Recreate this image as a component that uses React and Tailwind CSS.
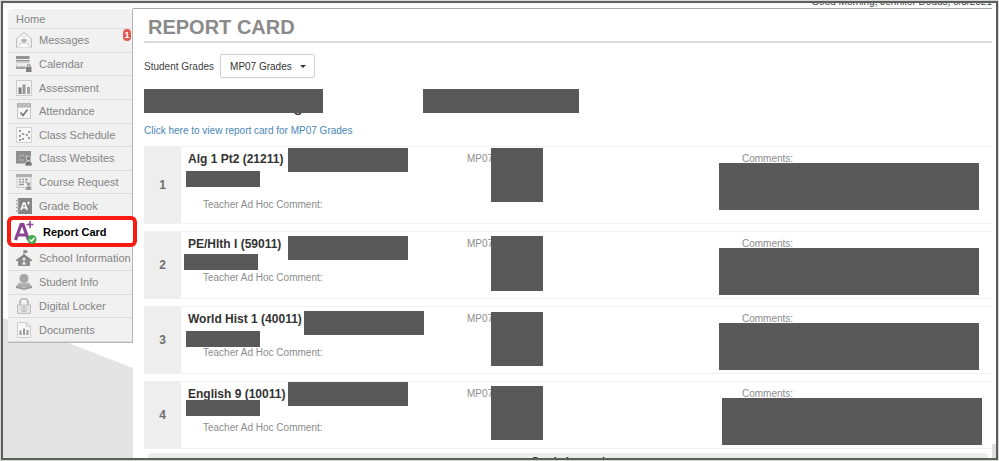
import React, { useState } from 'react';

const Svg = ({ children }) => (
  <svg viewBox="0 0 16 16" className="w-4 h-4 shrink-0" aria-hidden="true">{children}</svg>
);

const MessagesIcon = () => (
  <Svg>
    <path d="M.5 6.500 8 .5l7.500 6v9H.5z" fill="#f4f4f4" stroke="#c0c0c0" />
    <path d="M3 4.500h10v7H3z" fill="#fcfcfc" stroke="#d4d4d4" strokeWidth=".6" />
    <path d="m.5 15.500 5-4.500h5l5 4.500" fill="#fbfbfb" stroke="#c6c6c6" strokeWidth=".8" />
    <ellipse cx="8" cy="8.500" rx="2.800" ry="2" fill="#b2b2b2" />
  </Svg>
);

const CalendarIcon = () => (
  <Svg>
    <path d="M0 0h13.500v3H0zM0 4h13.500v1.500H0z" fill="#939393" />
    <path d="M.5 6.500h12.500v5H.5z" fill="#ececec" stroke="#c4c4c4" strokeWidth=".8" />
    <path d="M0 10.500h9.500V13H0z" fill="#a2a2a2" />
    <path d="M11.200 11.500V10a1.500 1.500 0 0 1 3 0v1.500" fill="none" stroke="#868686" />
    <path d="M10 11h5.500v5H10z" fill="#808080" />
  </Svg>
);

const AssessmentIcon = () => (
  <Svg>
    <path d="M.5.5h15v15H.5z" fill="#f3f3f3" stroke="#cbcbcb" />
    <path d="M2.500 7.500h3V14h-3z" fill="#808080" />
    <path d="M6.500 4.500h3V14h-3z" fill="#989898" />
    <path d="M11 7h3v7h-3z" fill="#a4a4a4" />
  </Svg>
);

const AttendanceIcon = () => (
  <Svg>
    <path d="M1.500 1h13v14.500h-13z" fill="#f7f7f7" stroke="#c4c4c4" />
    <path d="M1 0h14v4.500H1z" fill="#b4b4b4" />
    <path d="M4 1v2M8 1v2M12 1v2" stroke="#dedede" />
    <path d="m4.500 9.500 2.500 3 4.500-6" fill="none" stroke="#777" strokeWidth="1.700" />
  </Svg>
);

const ScheduleIcon = () => (
  <Svg>
    <path d="M.5.5h15v15H.5z" fill="#f8f8f8" stroke="#d2d2d2" />
    <path d="M3 3h2v2H3zM6 6h2v2H6zM12 4h2v2h-2zM3 8h2v2H3zM6 11h2v2H6zM10 7h2v2h-2zM3 12h2v2H3zM12 10h2v2h-2z" fill="#959595" />
    <path d="m4 4 3 3 4 1 2-3M4 9l3 3M11 8l2 3" fill="none" stroke="#bbb" strokeWidth=".6" />
  </Svg>
);

const WebsitesIcon = () => (
  <Svg>
    <path d="M0 1h15v12.500H0z" fill="#8f8f8f" />
    <path d="M3 6h2M6 5.500h2M9 6h2" stroke="#c9c9c9" />
    <path d="M2 10h6" stroke="#b8b8b8" />
    <circle cx="12.500" cy="8.500" r="2.200" fill="#777" stroke="#eee" strokeWidth=".7" />
    <path d="M9 16v-3l2-2h3l2 2v3z" fill="#777" stroke="#eee" strokeWidth=".7" />
  </Svg>
);

const CourseIcon = () => (
  <Svg>
    <path d="M0 0h16v3H0z" fill="#b0b0b0" />
    <path d="M1 3h14v10.500H1z" fill="#f0f0f0" stroke="#bbb" strokeWidth=".7" />
    <path d="M3 5.500h2M6 5.500h2M9 5.500h3M3 8h2M6 8h2M9 8h2M3 10.500h5" stroke="#9a9a9a" strokeWidth="1.500" />
    <circle cx="12.500" cy="10" r="1.800" fill="#9a9a9a" />
    <path d="M9.500 16c0-5.500 6-5.500 6 0z" fill="#9a9a9a" />
  </Svg>
);

const GradeBookIcon = () => (
  <Svg>
    <path d="M2 0h14v16H2z" fill="#858585" />
    <path d="M0 2.500h3.500M0 6h3.500M0 9.500h3.500M0 13h3.500" stroke="#aaa" strokeWidth="1.500" />
    <path d="m5 12 2.600-7h1L11.200 12M6 9.800h4.200" fill="none" stroke="#fff" strokeWidth="1.600" />
    <path d="M11 5h3M12.500 3.500v3" stroke="#fff" />
  </Svg>
);

const SchoolIcon = () => (
  <Svg>
    <path d="M8 0v5M8 .8h3v1.800H8z" fill="#888" stroke="#888" strokeWidth=".8" />
    <path d="M0 10 8 4l8 6v1H0z" fill="#858585" />
    <path d="M2 9.500h12V16H2z" fill="#8c8c8c" />
    <circle cx="8" cy="9" r="1.500" fill="#eee" />
    <path d="M6 14.500c1-.8.8-3 2-3s1 2.200 2 3z" fill="#eee" />
  </Svg>
);

const StudentIcon = () => (
  <Svg>
    <circle cx="8" cy="4.500" r="4.500" fill="#a6a6a6" />
    <path d="M1 13.500c0-5.500 4-5.500 7-4 3-1.500 7-1.500 7 4z" fill="#b0b0b0" />
    <path d="M0 11.500 8 14l8-2.500v2.500L8 16l-8-2z" fill="#9c9c9c" />
  </Svg>
);

const LockerIcon = () => (
  <Svg>
    <path d="M4 7V4.500a4 4 0 0 1 8 0V7" fill="none" stroke="#bcbcbc" strokeWidth="2" />
    <path d="M1.500 7h13v8.500h-13z" fill="#e6e6e6" stroke="#bbb" />
    <circle cx="8" cy="11.200" r="2.600" fill="#f5f5f5" stroke="#b0b0b0" />
    <path d="M8 10v2.500" stroke="#999" strokeWidth="1.200" />
  </Svg>
);

const DocumentsIcon = () => (
  <Svg>
    <path d="M1.500.5h9l4 4v11h-13z" fill="#f7f7f7" stroke="#cacaca" />
    <path d="M10.500.5v4h4" fill="none" stroke="#cacaca" />
    <path d="M3.500 8.500h2V13h-2zM7 6.500h2V13H7zM10.500 8h2v5h-2z" fill="#9a9a9a" />
  </Svg>
);

const ReportCardIcon = () => (
  <svg viewBox="0 0 24 24" className="w-6 h-6 shrink-0" aria-hidden="true">
    <path d="m1.500 20 5.500-15.500h2L14.500 20M4 15h8" fill="none" stroke="#8a4593" strokeWidth="3.200" />
    <path d="M12.500 4.500h7M16 1v7" stroke="#8a4593" strokeWidth="1.600" />
    <circle cx="18" cy="19.500" r="4.500" fill="#43ac4c" />
    <path d="m15.700 19.500 1.800 1.800 3-3.600" fill="none" stroke="#fff" strokeWidth="1.400" />
  </svg>
);

const upperItems = [
  { label: 'Messages', Icon: MessagesIcon, badge: 1 },
  { label: 'Calendar', Icon: CalendarIcon },
  { label: 'Assessment', Icon: AssessmentIcon },
  { label: 'Attendance', Icon: AttendanceIcon },
  { label: 'Class Schedule', Icon: ScheduleIcon },
  { label: 'Class Websites', Icon: WebsitesIcon },
  { label: 'Course Request', Icon: CourseIcon },
  { label: 'Grade Book', Icon: GradeBookIcon },
];

const lowerItems = [
  { label: 'School Information', Icon: SchoolIcon },
  { label: 'Student Info', Icon: StudentIcon },
  { label: 'Digital Locker', Icon: LockerIcon },
  { label: 'Documents', Icon: DocumentsIcon },
];

// The masks hide names, marks and remarks of the student
const courses = [
  {
    id: 1,
    name: 'Alg 1 Pt2 (21211)',
    size: 'h-[78px]',
    gap: 'mt-8',
    masks: [
      'left-[107px] top-px w-[120px] h-6',
      'left-[5px] top-6 w-[74px] h-4',
      'left-[310px] top-px w-[52px] h-[54px]',
      'left-[538px] top-4 w-[260px] h-[47px]',
    ],
  },
  {
    id: 2,
    name: 'PE/Hlth I (59011)',
    size: 'h-[68px]',
    gap: 'mt-5',
    masks: [
      'left-[107px] top-1 w-[120px] h-6',
      'left-[3px] top-[22px] w-[74px] h-4',
      'left-[310px] top-1 w-[52px] h-[55px]',
      'left-[538px] top-4 w-[260px] h-[47px]',
    ],
  },
  {
    id: 3,
    name: 'World Hist 1 (40011)',
    size: 'h-[68px]',
    gap: 'mt-5',
    masks: [
      'left-[123px] top-1 w-[120px] h-6',
      'left-[5px] top-6 w-[74px] h-4',
      'left-[310px] top-[5px] w-[52px] h-[54px]',
      'left-[538px] top-4 w-[260px] h-[47px]',
    ],
  },
  {
    id: 4,
    name: 'English 9 (10011)',
    size: 'h-[68px]',
    gap: 'mt-5',
    masks: [
      'left-[107px] top-0 w-[120px] h-6',
      'left-[5px] top-[18px] w-[74px] h-4',
      'left-[310px] top-1 w-[52px] h-[54px]',
      'left-[541px] top-4 w-[260px] h-[47px]',
    ],
  },
];

const NavItem = ({ label, Icon, badge }) => (
  <a
    href="#"
    className="relative flex-1 flex items-center gap-[7px] pl-2 border-b border-[#dcdcdc] text-[#858585] whitespace-nowrap"
  >
    <Icon />
    {label}
    {badge && (
      <span className="absolute top-0 right-px w-2 h-3 rounded-sm bg-[#e2574f] text-white text-[9px] leading-3 font-bold text-center">
        {badge}
      </span>
    )}
  </a>
);

const Sidebar = () => (
  <nav className="relative pl-[5px] pt-px w-[130px] shrink-0 text-[11px] leading-4">
    {/* Grey swoosh behind the menu */}
    <svg
      viewBox="0 0 130 140"
      preserveAspectRatio="none"
      className="absolute left-0 bottom-0 w-full h-[140px]"
      aria-hidden="true"
    >
      <path d="M0 0C30 10 80 31 130 50V140H0z" fill="#e4e4e4" />
    </svg>

    <div className="relative">
      <div className="flex flex-col border-r border-[#b5b5b5] rounded-tl bg-[#f1f1f1]">
        <a href="#" className="h-5 pl-2 border-b border-[#dcdcdc] text-[#858585] leading-5">Home</a>
        <div className="h-[189px] flex flex-col">
          {upperItems.map((item) => <NavItem key={item.label} {...item} />)}
        </div>
      </div>

      <a
        href="#"
        aria-current="page"
        className="relative flex items-center gap-[5px] h-[31px] -ml-px -mr-1 pl-[3px] -mt-0.5 z-10 bg-white border-4 border-[#fb1a12] rounded-md font-bold text-black whitespace-nowrap"
      >
        <ReportCardIcon />
        Report Card
      </a>

      <div className="h-24 flex flex-col border-r border-b border-[#b5b5b5] bg-[#f1f1f1]">
        {lowerItems.map((item) => <NavItem key={item.label} {...item} />)}
      </div>
    </div>
  </nav>
);

const CourseRow = ({ course }) => (
  <article className={`relative flex border-y border-[#f1f1f1] ${course.size}`}>
    <div className="w-[37px] shrink-0 flex items-center justify-center bg-[#eeeeee] text-xs font-bold text-[#6f6f6f]">
      {course.id}
    </div>
    <div className="relative flex-1 flex pl-[7px] pt-1 text-[10px] leading-4 text-[#8c8c8c]">
      <div className="w-[279px]">
        <h2 className="text-xs leading-4 font-bold text-[#333]">{course.name}</h2>
        <p className={`pl-[15px] leading-3 ${course.gap}`}>Teacher Ad Hoc Comment:</p>
      </div>
      <div className="w-[275px]">MP07</div>
      <div>Comments:</div>
      {course.masks.map((mask) => (
        <span key={mask} className={`absolute bg-[#595959] ${mask}`} />
      ))}
    </div>
  </article>
);

const App = () => {
  const [period, setPeriod] = useState('MP07 Grades');

  return (
    <div className="h-screen p-px bg-[#d3d8d3] font-['Liberation_Sans',Arial,sans-serif]">
      <div className="h-full flex flex-col border-2 border-[#5b5e5b] bg-white overflow-hidden">
        {/* --- Greeting strip, scrolled almost out of view --- */}
        <header className="h-[5px] shrink-0 flex items-end justify-end pr-1 overflow-hidden bg-[#fafafa] text-[10px] leading-3 text-[#444]">
          Good Morning, Jennifer Dodds, 6/3/2021
        </header>

        <div className="flex-1 min-h-0 flex">
          <Sidebar />

          <main className="relative flex-1 min-w-0 pl-[11px] pr-1 overflow-hidden">
            <div className="-ml-[11px] pl-[11px] border-t border-[#a8a8a8]">
              <h1 className="h-[34px] pl-1 pt-[6px] border-b-2 border-[#dadada] text-xl leading-6 font-bold text-[#8a8a8a]">
                REPORT CARD
              </h1>
            </div>

            {/* --- Marking period --- */}
            <div className="mt-[11px] flex items-center gap-[6px] text-[10px] text-[#444]">
              <label htmlFor="period">Student Grades</label>
              <div className="relative">
                <select
                  id="period"
                  value={period}
                  onChange={(e) => setPeriod(e.target.value)}
                  className="appearance-none block w-[95px] h-6 pl-[9px] border border-[#cfcfcf] rounded-xs bg-white text-[#333]"
                >
                  <option>MP07 Grades</option>
                  <option>MP06 Grades</option>
                </select>
                <span className="absolute right-[9px] top-[11px] border-x-3 border-t-3 border-x-transparent border-t-[#333] pointer-events-none" />
              </div>
            </div>

            <div className="relative mt-[11px] h-7">
              <div className="pl-[149px] pt-1 text-lg leading-6 text-[#333]">g</div>
              <span className="absolute left-0 top-0 w-[179px] h-6 bg-[#595959]" />
              <span className="absolute left-[279px] top-0 w-[156px] h-6 bg-[#595959]" />
            </div>

            <a href="#" className="block mt-[6px] text-[10px] leading-4 text-[#4a86b8]">
              Click here to view report card for MP07 Grades
            </a>

            <section className="mt-[7px] flex flex-col gap-[7px]">
              {courses.map((course) => <CourseRow key={course.id} course={course} />)}
            </section>

            <footer className="mx-1 mt-1 pt-px rounded-t-sm bg-[#ebebeb] text-center text-[11px] leading-[14px] font-bold text-[#333]">
              Grade Legend
            </footer>
            <span className="absolute right-0 bottom-0 w-1 h-[14px] bg-[#dedede]" />
          </main>
        </div>
      </div>
    </div>
  );
};

export default App;
